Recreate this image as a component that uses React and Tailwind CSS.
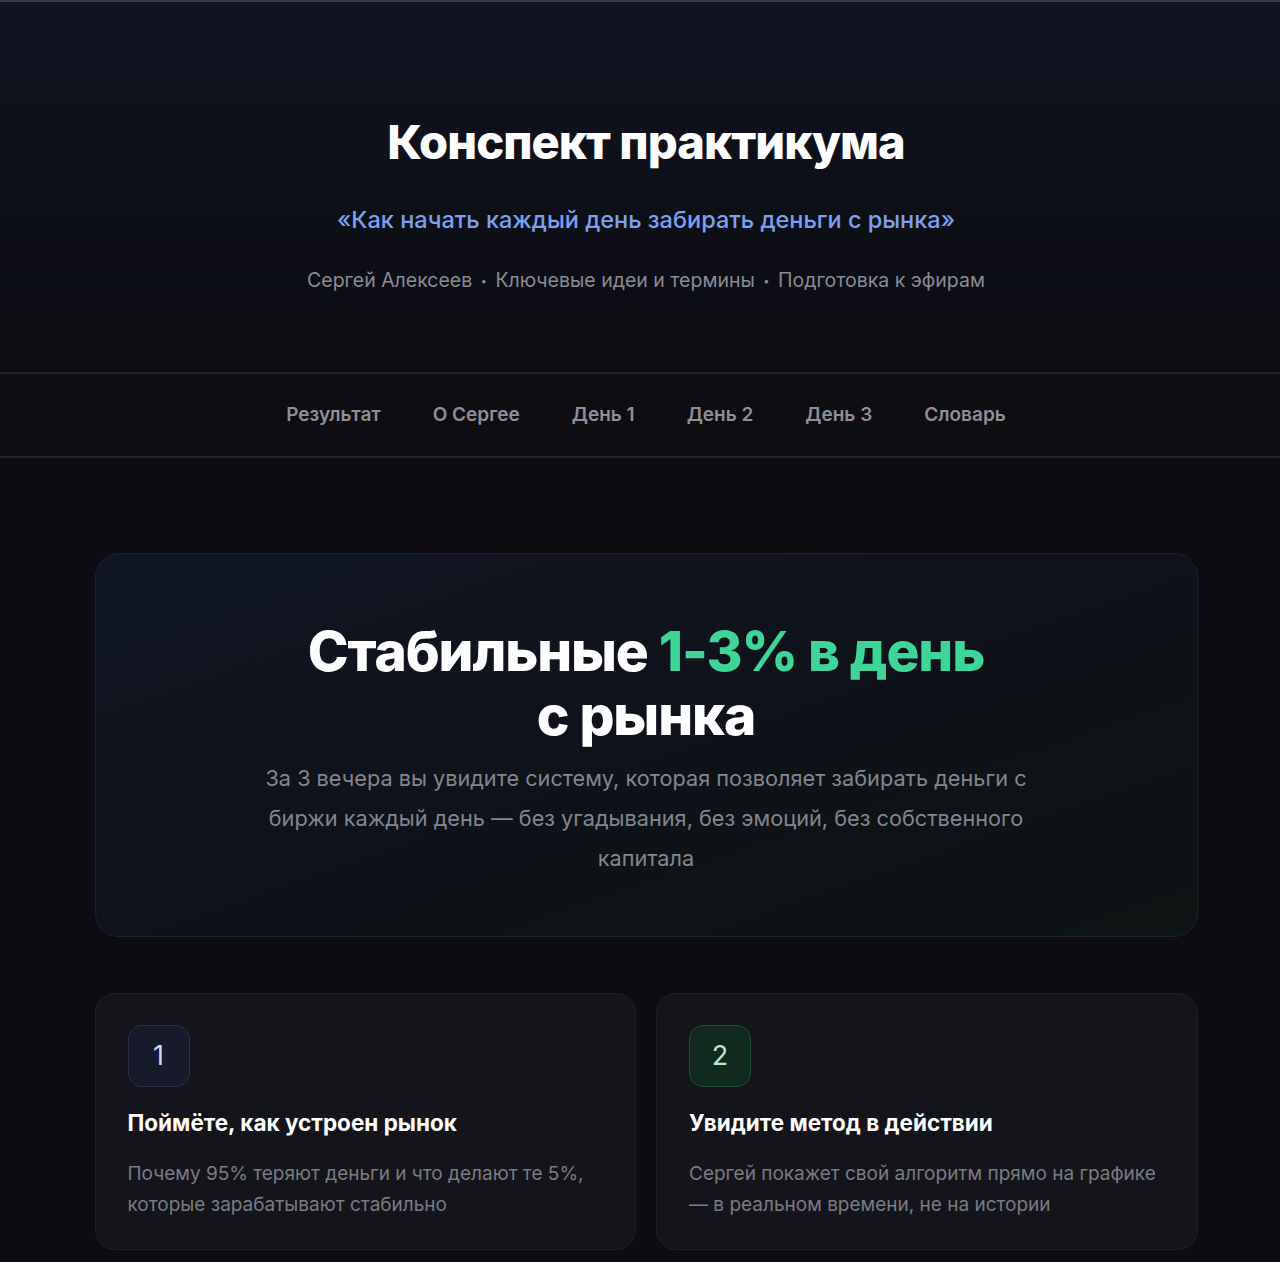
const navItems = ['Результат', 'О Сергее', 'День 1', 'День 2', 'День 3', 'Словарь'];

const features = [
  {
    n: '1',
    title: 'Поймёте, как устроен рынок',
    text: 'Почему 95% теряют деньги и что делают те 5%, которые зарабатывают стабильно',
    badge: 'bg-[#161a2b] border-[#2a2f47] text-[#d4d8ea]',
  },
  {
    n: '2',
    title: 'Увидите метод в действии',
    text: 'Сергей покажет свой алгоритм прямо на графике — в реальном времени, не на истории',
    badge: 'bg-[#112a20] border-[#1f4a36] text-[#bfe3cd]',
  },
];

const Dot = () => <span className="mx-[3px] align-middle text-[11px]">•</span>;

export default function App() {
  return (
    <div className="min-h-screen bg-[#0c0c11] font-['Inter',sans-serif] text-white">
      {/* Header */}
      <header className="border-t-2 border-[#3a3a42] bg-gradient-to-b from-[#0f1421] to-[#0c0c11] pt-[110px] pb-[76px]">
        <div className="pl-3 text-center">
          <h1 className="text-[47px] font-extrabold leading-[60px] tracking-[-0.02em]">Конспект практикума</h1>
          <p className="mt-[30px] text-[23.5px] font-medium leading-[35px] text-[#7ba1f3]">«Как начать каждый день забирать деньги с рынка»</p>
          <p className="mt-[29px] text-[19.5px] leading-[29px] text-[#8b8b94]">
            Сергей Алексеев <Dot /> Ключевые идеи и термины <Dot /> Подготовка к эфирам
          </p>
        </div>
      </header>

      {/* Nav */}
      <nav className="border-y-2 border-[#23232b] bg-[#0d0d12]">
        <ul className="flex h-[82px] items-center justify-center gap-[52px] pl-3">
          {navItems.map((item) => (
            <li key={item} className="text-[19px] font-semibold text-[#8f8f98]">
              {item}
            </li>
          ))}
        </ul>
      </nav>

      <main className="pl-3 pt-[95px]">
        <div className="mx-auto w-[1103px]">
          {/* Hero */}
          <section className="rounded-[24px] border border-[#1e2129] bg-gradient-to-br from-[#101624] via-[#0e1219] to-[#0d1413] px-10 pt-[65px] pb-[58px] text-center">
            <h2 className="text-[55px] font-extrabold leading-[64px] tracking-[-0.02em]">
              Стабильные <span className="text-[#3dd598]">1-3% в день</span>
              <br />с рынка
            </h2>
            <p className="mx-auto mt-[11px] max-w-[790px] text-[21.7px] leading-[40px] text-[#85858e]">
              За 3 вечера вы увидите систему, которая позволяет забирать деньги с биржи каждый день — без угадывания, без эмоций, без собственного капитала
            </p>
          </section>

          {/* Features */}
          <section className="mt-[56px] grid grid-cols-2 gap-5">
            {features.map((f) => (
              <div key={f.n} className="rounded-[20px] border border-[#1f2027] bg-[#14151a] pl-8 pr-[26px] pt-[31px] pb-[29px]">
                <div className={`flex h-[62px] w-[62px] items-center justify-center rounded-[14px] border text-[27px] ${f.badge}`}>
                  {f.n}
                </div>
                <h3 className="mt-[21px] text-[22.5px] font-bold leading-[30px] text-white">{f.title}</h3>
                <p className="mt-[20px] text-[19px] leading-[31px] text-[#7b7b84]">{f.text}</p>
              </div>
            ))}
          </section>
        </div>
      </main>
    </div>
  );
}
